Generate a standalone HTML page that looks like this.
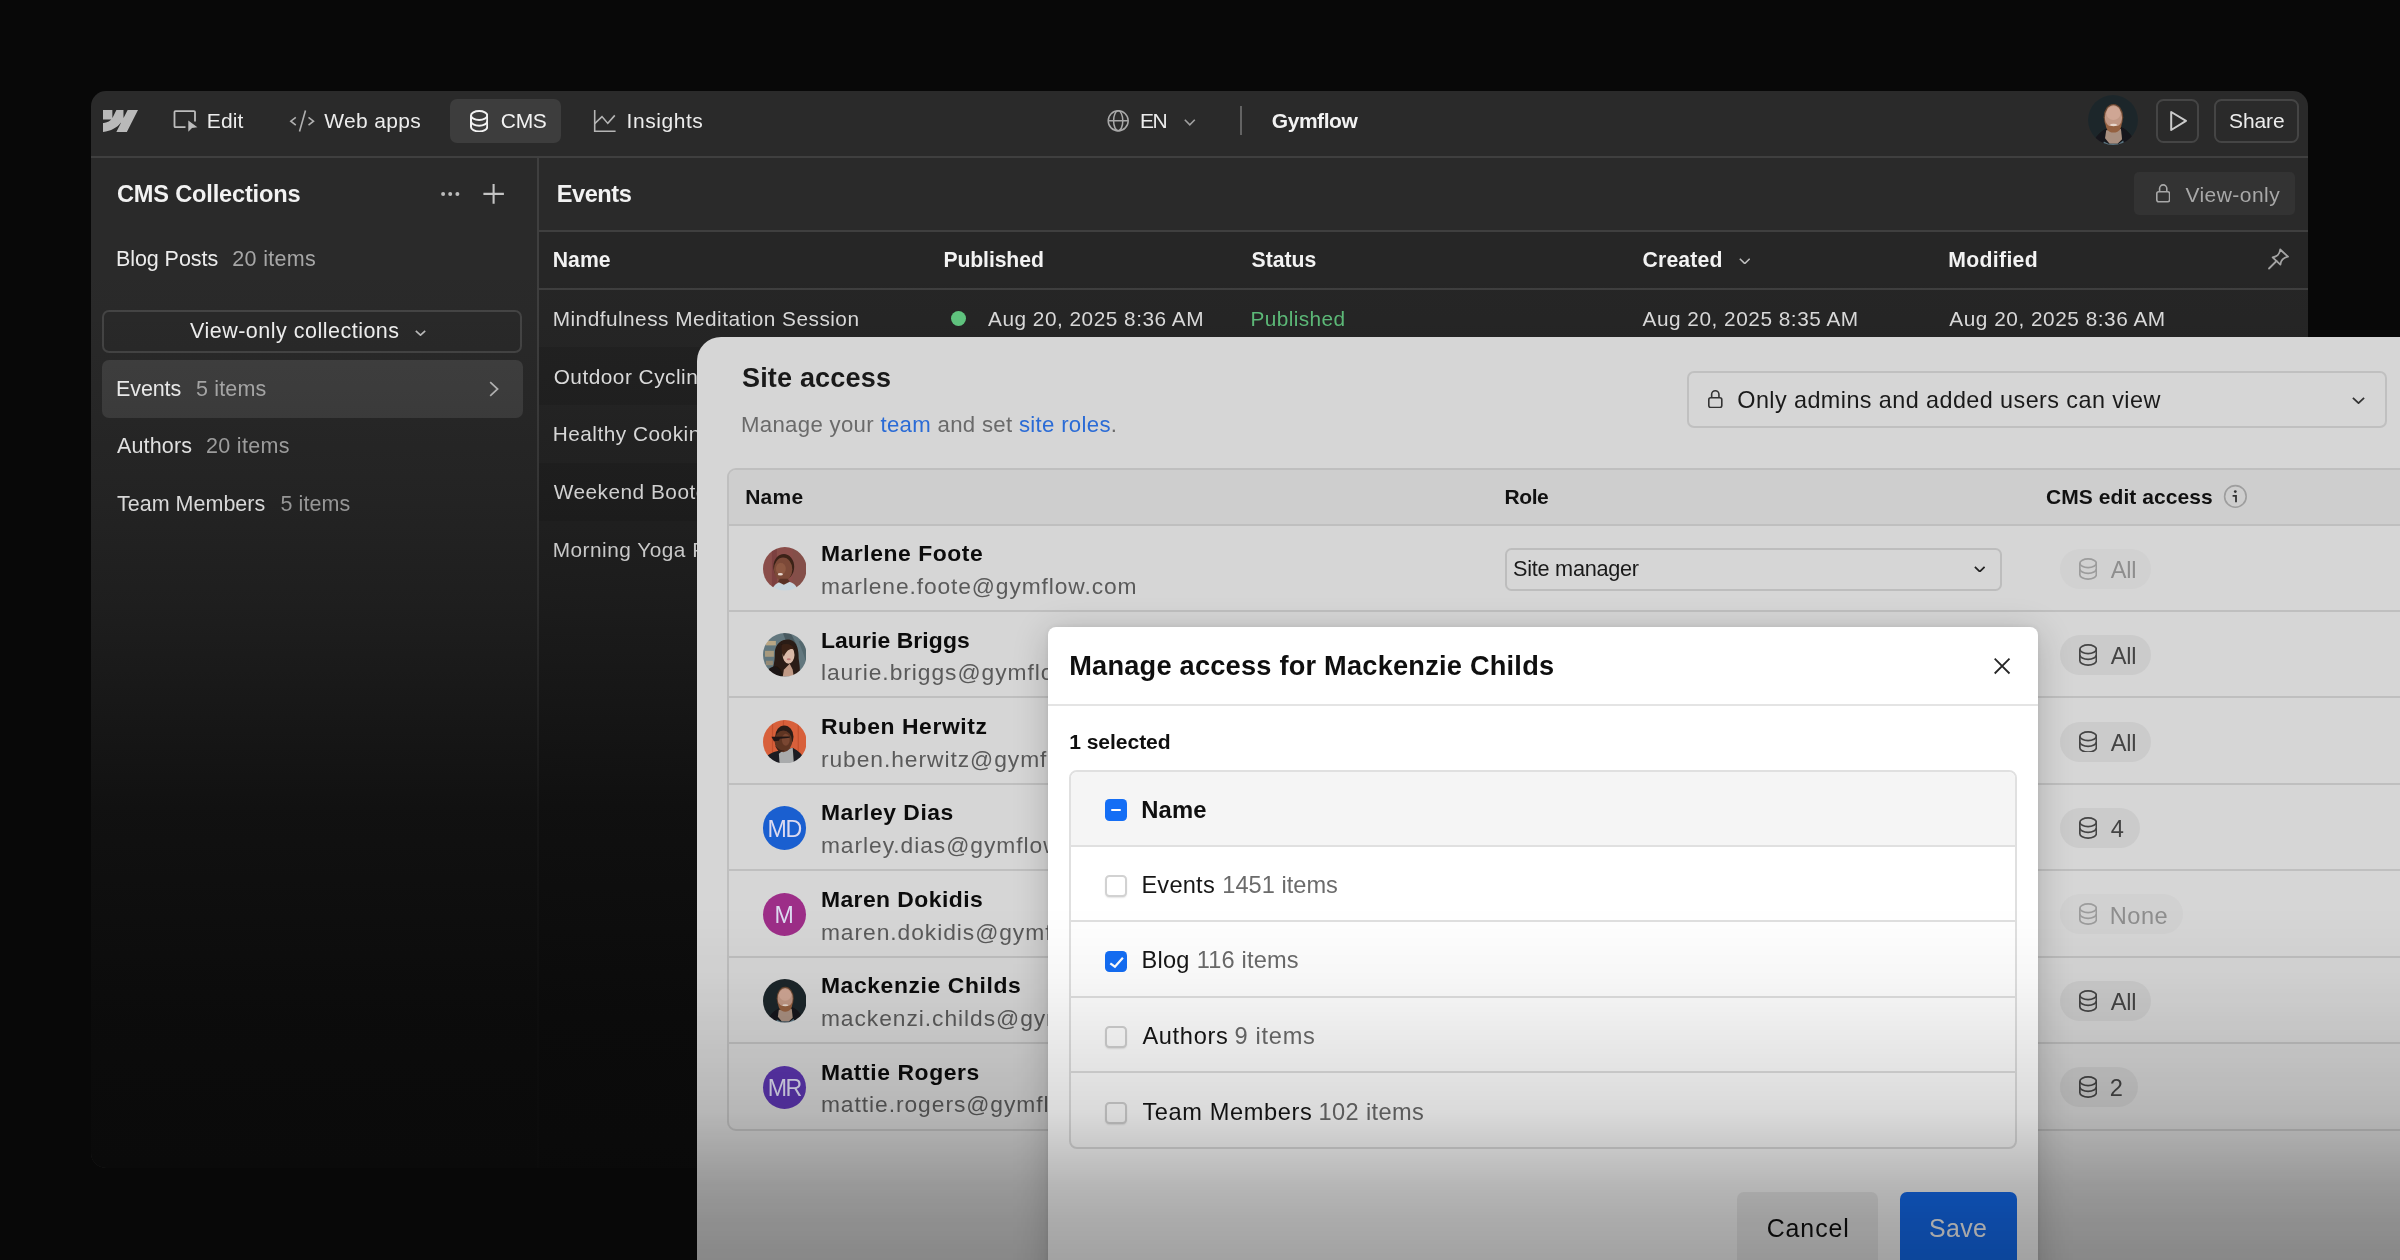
<!DOCTYPE html><html><head><meta charset="utf-8"><title>Site access</title><style>
html,body{margin:0;padding:0}
body{width:2400px;height:1260px;background:#080808;overflow:hidden;position:relative;font-family:'Liberation Sans',sans-serif}
.t{position:absolute;white-space:nowrap;line-height:30px;height:30px;font-kerning:normal}
.layer{position:absolute;left:0;top:0;width:2400px;height:1260px;overflow:hidden;will-change:transform}
.b{position:absolute;box-sizing:border-box}
</style></head><body><div class="layer"><div class="b" style="left:91px;top:91px;width:2217px;height:1077px;border-radius:15px;background:#2a2a2a;overflow:hidden">
<div style="position:absolute;left:-91px;top:-91px;width:2400px;height:1260px">
<div class="b" style="left:539px;top:232px;width:1770px;height:940px;background:#262626"></div>
<div class="b" style="left:539px;top:346.6px;width:1770px;height:58.39999999999998px;background:#222222"></div>
<div class="b" style="left:539px;top:463px;width:1770px;height:58px;background:#222222"></div>
<div class="b" style="left:91px;top:156px;width:2217px;height:2px;background:#3f3f3f"></div>
<div class="b" style="left:537px;top:157px;width:2px;height:1011px;background:#3f3f3f"></div>
<div class="b" style="left:539px;top:230px;width:1770px;height:2px;background:#3f3f3f"></div>
<div class="b" style="left:539px;top:287.7px;width:1770px;height:2px;background:#3f3f3f"></div>
<div class="b" style="left:450.3px;top:99.2px;width:110.8px;height:43.4px;border-radius:7px;background:#3d3d3d"></div>
<div class="b" style="left:1240.2px;top:106.3px;width:2px;height:28.7px;background:#636363"></div>
<div class="b" style="left:2156px;top:99px;width:43px;height:43.5px;border-radius:7.5px;border:2px solid #454545"></div>
<div class="b" style="left:2213.7px;top:99px;width:85.5px;height:43.5px;border-radius:7.5px;border:2px solid #454545"></div>
<div class="b" style="left:2133.8px;top:172.2px;width:161.5px;height:43.2px;border-radius:5px;background:#333"></div>
<div class="b" style="left:102px;top:309.8px;width:420px;height:42.8px;border-radius:7px;border:2px solid #464646"></div>
<div class="b" style="left:102px;top:360.2px;width:420.5px;height:57.8px;border-radius:7px;background:#414141"></div>
<div class="b" style="left:950.9px;top:310.8px;width:15px;height:15px;border-radius:50%;background:#62c982"></div>
<svg style="position:absolute;left:2087.5px;top:95.3px" width="50" height="50" viewBox="0 0 44 44" ><defs><clipPath id="av0"><circle cx="22" cy="22" r="22"/></clipPath><filter id="av0f" x="-10%" y="-10%" width="120%" height="120%"><feGaussianBlur stdDeviation="0.6"/></filter></defs><g clip-path="url(#av0)"><g filter="url(#av0f)"><rect x="-4" y="-4" width="52" height="52" fill="#1f282b"/><path d="M4 44C6 36 12 31 17 29L29 28C36 31 40 37 42 44Z" fill="#17181b"/><path d="M16 31L29 30L30 39L26 43L19 43L15 38Z" fill="#a98f80"/><path d="M14 41L18 43L27 43L31 40L32 44L13 44Z" fill="#5a7482"/><ellipse cx="22.4" cy="19.5" rx="8.6" ry="11.6" fill="#6a4630"/><ellipse cx="22.4" cy="20" rx="7.6" ry="11" fill="#c09784"/><ellipse cx="22.4" cy="16" rx="6.2" ry="6" fill="#cfa694"/><path d="M15.5 23C17 27 19 28 22.5 27C26 28 28 27 29.5 23C30 30 27 33 22.5 33C18 33 15 30 15.5 23Z" fill="#94603f"/><ellipse cx="22.5" cy="26.4" rx="3" ry="1" fill="#e6d6cc"/></g></g></svg>
<svg style="position:absolute;left:103px;top:110px" width="35" height="22" viewBox="0 0 1080 674" ><path fill="#b9b9b9" d="M1080 0L735.386 673.684H411.695L555.916 394.481H549.445C430.464 548.934 252.942 650.61 0 673.684V398.344C0 398.344 161.813 388.787 256.938 288.776H0V0.00531H288.771V237.515L295.252 237.489L413.254 0.00531H631.644V236.009L638.126 235.999L760.555 0H1080Z"/></svg><svg style="position:absolute;left:170px;top:106px" width="32" height="30" viewBox="0 0 32 30" ><path d="M15.5 21.2H5.5A1 1 0 0 1 4.5 20.2V6.1A1 1 0 0 1 5.5 5.1H24A1 1 0 0 1 25 6.1V15.5" fill="none" stroke="#bdbdbd" stroke-width="1.8"/><path d="M18.3 14.5L27.4 21.3L22 22L18.3 25.7Z" fill="#bdbdbd"/></svg><svg style="position:absolute;left:288px;top:108px" width="30" height="26" viewBox="0 0 30 26" ><g fill="none" stroke="#b0b0b0" stroke-width="1.6"><path d="M7.8 9.3L2.8 13.2L7.8 17.1"/><path d="M17.5 2.5L11.5 23.5"/><path d="M20.5 9.3L25.5 13.2L20.5 17.1"/></g></svg><svg style="position:absolute;left:469.95px;top:109.8px" width="18.25" height="22.4" viewBox="0 0 18.25 22.4" ><g fill="none" stroke="#f2f2f2" stroke-width="2.0"><ellipse cx="9.125" cy="5.4799999999999995" rx="8.125" ry="4.4799999999999995"/><path d="M1.0 5.4799999999999995V16.919999999999998A8.125 4.4799999999999995 0 0 0 17.25 16.919999999999998V5.4799999999999995"/><path d="M1.0 11.2A8.125 4.4799999999999995 0 0 0 17.25 11.2"/></g></svg><svg style="position:absolute;left:590px;top:108px" width="28" height="26" viewBox="0 0 28 26" ><g fill="none" stroke="#b5b5b5" stroke-width="1.6"><path d="M4.7 2V23.2H25.6"/><path d="M4.7 15.6L12 8.6L17.8 15.4L24.8 7.4"/></g></svg><svg style="position:absolute;left:1106px;top:109px" width="24" height="24" viewBox="0 0 24 24" ><g fill="none" stroke="#a8a8a8" stroke-width="1.5"><circle cx="12.2" cy="11.8" r="10"/><ellipse cx="12.2" cy="11.8" rx="4.6" ry="10"/><path d="M2.2 11.8H22.2"/></g></svg><svg style="position:absolute;left:1184px;top:119px" width="11.6" height="6.6" viewBox="0 0 11.6 6.6" ><path d="M0.8 0.8L5.8 5.8L10.799999999999999 0.8" fill="none" stroke="#a0a0a0" stroke-width="1.6"/></svg><svg style="position:absolute;left:2166px;top:109px" width="24" height="24" viewBox="0 0 24 24" ><path d="M5.2 3L20 11.8L5.2 21Z" fill="none" stroke="#cacaca" stroke-width="2" stroke-linejoin="round"/></svg><svg style="position:absolute;left:440px;top:190px" width="22" height="8" viewBox="0 0 22 8" ><g fill="#bcbcbc"><circle cx="3.1" cy="3.9" r="2"/><circle cx="10.2" cy="3.9" r="2"/><circle cx="17.4" cy="3.9" r="2"/></g></svg><svg style="position:absolute;left:483px;top:184px" width="22" height="21" viewBox="0 0 22 21" ><path d="M10.6 0V19.8M0.4 9.9H20.9" fill="none" stroke="#c4c4c4" stroke-width="2.1"/></svg><svg style="position:absolute;left:2156px;top:183.2px" width="14.4" height="19.6" viewBox="0 0 14.4 19.6" ><g fill="none" stroke="#a8a8a8" stroke-width="1.6"><rect x="0.8" y="8.82" width="12.8" height="9.98" rx="2"/><path d="M3.6 8.82V5.488000000000001A3.6 3.6 0 0 1 10.8 5.488000000000001V8.82"/></g></svg><svg style="position:absolute;left:415px;top:329.5px" width="11" height="6" viewBox="0 0 11 6" ><path d="M0.8 0.8L5.5 5.2L10.2 0.8" fill="none" stroke="#c0c0c0" stroke-width="1.6"/></svg><svg style="position:absolute;left:488px;top:381px" width="12" height="16" viewBox="0 0 12 16" ><path d="M2.2 1.2L9.6 8L2.2 14.8" fill="none" stroke="#c0c0c0" stroke-width="1.7"/></svg><svg style="position:absolute;left:1738.5px;top:257.6px" width="11.5" height="6.4" viewBox="0 0 11.5 6.4" ><path d="M0.8 0.8L5.75 5.6000000000000005L10.7 0.8" fill="none" stroke="#c0c0c0" stroke-width="1.6"/></svg><svg style="position:absolute;left:2266px;top:247px" width="24" height="24" viewBox="0 0 24 24" ><g fill="none" stroke="#a4a4a4" stroke-width="1.8" stroke-linejoin="round" stroke-linecap="round"><path d="M14.2 2.5L22 9.7Q15 11.15 14.4 17.6L6.6 10.3Q13.4 9.4 14.2 2.5Z"/><path d="M10.5 14L3 21.5"/></g></svg>
<div class="b" style="left:91px;top:91px;width:2217px;height:1077px;background:linear-gradient(to bottom, rgba(8,8,8,0) 0px, rgba(8,8,8,0) 159px, rgba(8,8,8,0.02) 209px, rgba(8,8,8,0.09) 299px, rgba(8,8,8,0.20) 409px, rgba(8,8,8,0.34) 509px, rgba(8,8,8,0.55) 620px, rgba(8,8,8,0.74) 719px, rgba(8,8,8,0.90) 928px, rgba(8,8,8,0.94) 1077px)"></div>
<span class="t" id="t0" style="left:206.80px;top:106.00px;font-size:21.0px;color:#ececec;font-weight:400;letter-spacing:0.149px">Edit</span>
<span class="t" id="t1" style="left:324.30px;top:106.00px;font-size:21.0px;color:#ececec;font-weight:400;letter-spacing:0.318px">Web apps</span>
<span class="t" id="t2" style="left:500.80px;top:106.00px;font-size:21.0px;color:#f2f2f2;font-weight:400;letter-spacing:-0.329px">CMS</span>
<span class="t" id="t3" style="left:626.60px;top:106.00px;font-size:21.0px;color:#ececec;font-weight:400;letter-spacing:0.547px">Insights</span>
<span class="t" id="t4" style="left:1140.00px;top:106.00px;font-size:21.0px;color:#ececec;font-weight:400;letter-spacing:-1.607px">EN</span>
<span class="t" id="t5" style="left:1271.80px;top:106.00px;font-size:21.0px;color:#f2f2f2;font-weight:700;letter-spacing:-0.457px">Gymflow</span>
<span class="t" id="t6" style="left:2229.00px;top:106.00px;font-size:21.0px;color:#ececec;font-weight:400;letter-spacing:-0.090px">Share</span>
<span class="t" id="t7" style="left:117.00px;top:179.00px;font-size:23.6px;color:#f2f2f2;font-weight:700;letter-spacing:-0.187px">CMS Collections</span>
<span class="t" id="t8" style="left:556.70px;top:179.00px;font-size:23.6px;color:#f2f2f2;font-weight:700;letter-spacing:-0.450px">Events</span>
<span class="t" id="t9" style="left:2185.40px;top:180.00px;font-size:21.0px;color:#a8a8a8;font-weight:400;letter-spacing:0.456px">View-only</span>
<span class="t" id="t10" style="left:115.90px;top:244.00px;font-size:21.5px;color:#ececec;font-weight:400;letter-spacing:-0.058px">Blog Posts</span>
<span class="t" id="t11" style="left:232.30px;top:244.00px;font-size:21.5px;color:#a6a6a6;font-weight:400;letter-spacing:0.314px">20 items</span>
<span class="t" id="t12" style="left:190.00px;top:316.00px;font-size:21.5px;color:#ececec;font-weight:400;letter-spacing:0.494px">View-only collections</span>
<span class="t" id="t13" style="left:116.00px;top:374.00px;font-size:21.5px;color:#e8e8e8;font-weight:400;letter-spacing:-0.096px">Events</span>
<span class="t" id="t14" style="left:196.00px;top:374.00px;font-size:21.5px;color:#a4a4a4;font-weight:400;letter-spacing:0.159px">5 items</span>
<span class="t" id="t15" style="left:117.00px;top:431.00px;font-size:21.5px;color:#e0e0e0;font-weight:400;letter-spacing:0.142px">Authors</span>
<span class="t" id="t16" style="left:206.00px;top:431.00px;font-size:21.5px;color:#9c9c9c;font-weight:400;letter-spacing:0.328px">20 items</span>
<span class="t" id="t17" style="left:117.00px;top:489.00px;font-size:21.5px;color:#d8d8d8;font-weight:400;letter-spacing:0.009px">Team Members</span>
<span class="t" id="t18" style="left:280.50px;top:489.00px;font-size:21.5px;color:#969696;font-weight:400;letter-spacing:0.075px">5 items</span>
<span class="t" id="t19" style="left:552.70px;top:245.00px;font-size:21.2px;color:#f2f2f2;font-weight:700;letter-spacing:0.059px">Name</span>
<span class="t" id="t20" style="left:943.40px;top:245.00px;font-size:21.2px;color:#f2f2f2;font-weight:700;letter-spacing:-0.100px">Published</span>
<span class="t" id="t21" style="left:1251.50px;top:245.00px;font-size:21.2px;color:#f2f2f2;font-weight:700;letter-spacing:0.006px">Status</span>
<span class="t" id="t22" style="left:1642.50px;top:245.00px;font-size:21.2px;color:#f2f2f2;font-weight:700;letter-spacing:0.175px">Created</span>
<span class="t" id="t23" style="left:1948.30px;top:245.00px;font-size:21.2px;color:#f2f2f2;font-weight:700;letter-spacing:0.322px">Modified</span>
<span class="t" id="t24" style="left:552.70px;top:304.00px;font-size:20.8px;color:#d8d8d8;font-weight:400;letter-spacing:0.476px">Mindfulness Meditation Session</span>
<span class="t" id="t25" style="left:988.00px;top:304.00px;font-size:20.8px;color:#d8d8d8;font-weight:400;letter-spacing:0.508px">Aug 20, 2025 8:36 AM</span>
<span class="t" id="t26" style="left:1250.50px;top:304.00px;font-size:20.8px;color:#5cb877;font-weight:400;letter-spacing:0.403px">Published</span>
<span class="t" id="t27" style="left:1642.50px;top:304.00px;font-size:20.8px;color:#d8d8d8;font-weight:400;letter-spacing:0.519px">Aug 20, 2025 8:35 AM</span>
<span class="t" id="t28" style="left:1949.30px;top:304.00px;font-size:20.8px;color:#d8d8d8;font-weight:400;letter-spacing:0.529px">Aug 20, 2025 8:36 AM</span>
<span class="t" id="t29" style="left:553.70px;top:362.00px;font-size:20.8px;color:#dadada;font-weight:400;letter-spacing:0.500px">Outdoor Cycling Adventure</span>
<span class="t" id="t30" style="left:552.70px;top:419.00px;font-size:20.8px;color:#d6d6d6;font-weight:400;letter-spacing:0.500px">Healthy Cooking Workshop</span>
<span class="t" id="t31" style="left:553.70px;top:477.00px;font-size:20.8px;color:#d0d0d0;font-weight:400;letter-spacing:0.500px">Weekend Bootcamp</span>
<span class="t" id="t32" style="left:552.70px;top:535.00px;font-size:20.8px;color:#c8c8c8;font-weight:400;letter-spacing:0.500px">Morning Yoga Flow</span>
</div></div></div><div class="layer"><div class="b" style="left:697px;top:337px;width:1800px;height:1000px;border-radius:24px;background:#d6d6d6"></div>
<div class="b" style="left:1687px;top:371px;width:700px;height:57px;border-radius:7px;border:2px solid #c0c0c0"></div>
<svg style="position:absolute;left:1708.3px;top:389.2px" width="14.6" height="19.3" viewBox="0 0 14.6 19.3" ><g fill="none" stroke="#333" stroke-width="1.6"><rect x="0.8" y="8.685" width="13.0" height="9.815" rx="2"/><path d="M3.65 8.685V5.404000000000001A3.65 3.65 0 0 1 10.95 5.404000000000001V8.685"/></g></svg>
<svg style="position:absolute;left:2352px;top:396.5px" width="13" height="7" viewBox="0 0 13 7" ><path d="M0.9 0.9L6.5 6.1L12.1 0.9" fill="none" stroke="#333" stroke-width="1.8"/></svg>
<div class="b" style="left:727.3px;top:468.3px;width:1800px;height:662.7px;border-radius:9px;border:2px solid #bfbfbf;overflow:hidden">
<div class="b" style="left:0;top:0;width:1800px;height:54px;background:#cecece"></div>
<div class="b" style="left:0;top:53.4px;width:1800px;height:2px;background:#bfbfbf"></div>
<div class="b" style="left:0;top:139.8px;width:1800px;height:2px;background:#bfbfbf"></div>
<div class="b" style="left:0;top:226.2px;width:1800px;height:2px;background:#bfbfbf"></div>
<div class="b" style="left:0;top:312.6px;width:1800px;height:2px;background:#bfbfbf"></div>
<div class="b" style="left:0;top:399.0px;width:1800px;height:2px;background:#bfbfbf"></div>
<div class="b" style="left:0;top:485.4px;width:1800px;height:2px;background:#bfbfbf"></div>
<div class="b" style="left:0;top:571.8px;width:1800px;height:2px;background:#bfbfbf"></div>
</div>
<svg style="position:absolute;left:2223px;top:483.5px" width="25" height="25" viewBox="0 0 25 25" ><circle cx="12.4" cy="12.4" r="10.8" fill="none" stroke="#9e9e9e" stroke-width="1.6"/><circle cx="12.3" cy="7.6" r="1.4" fill="#333"/><path d="M9.6 11.9H13V18.3" fill="none" stroke="#333" stroke-width="1.8"/></svg>
<div class="b" style="left:1505px;top:547.5px;width:496.5px;height:43px;border-radius:6.5px;border:2px solid #bdbdbd"></div>
<svg style="position:absolute;left:1973.5px;top:565.5px" width="11.5" height="6.5" viewBox="0 0 11.5 6.5" ><path d="M0.9 0.9L5.75 5.6L10.6 0.9" fill="none" stroke="#222" stroke-width="1.8"/></svg>
<svg style="position:absolute;left:762.8000000000001px;top:547.0px" width="43.6" height="43.6" viewBox="0 0 44 44" ><defs><clipPath id="av1"><circle cx="22" cy="22" r="22"/></clipPath><filter id="av1f" x="-10%" y="-10%" width="120%" height="120%"><feGaussianBlur stdDeviation="0.7"/></filter></defs><g clip-path="url(#av1)"><g filter="url(#av1f)"><rect x="-4" y="-4" width="52" height="52" fill="#8a4e4a"/><rect x="9" y="-4" width="5" height="52" fill="#7c403f"/><rect x="30" y="-4" width="18" height="52" fill="#84504a"/><path d="M8 48C9 39 14 35.5 20 34.5L24 34.5C31 35.5 35 39 36 48Z" fill="#c9d6de"/><ellipse cx="21" cy="20" rx="10.5" ry="13" fill="#3a2119"/><ellipse cx="20.3" cy="22.5" rx="9.3" ry="12" fill="#7b4a37"/><ellipse cx="18" cy="22" rx="5" ry="6" fill="#8d5842"/><ellipse cx="17.5" cy="27.5" rx="2.6" ry="1.2" fill="#e8d8d0"/><path d="M15 35L21 38L27 35L25 32L17 32Z" fill="#5a3226"/></g></g></svg>
<svg style="position:absolute;left:762.8000000000001px;top:633.4px" width="43.6" height="43.6" viewBox="0 0 44 44" ><defs><clipPath id="av2"><circle cx="22" cy="22" r="22"/></clipPath><filter id="av2f" x="-10%" y="-10%" width="120%" height="120%"><feGaussianBlur stdDeviation="0.7"/></filter></defs><g clip-path="url(#av2)"><g filter="url(#av2f)"><rect x="-4" y="-4" width="52" height="52" fill="#62777e"/><rect x="3" y="8" width="10" height="4.5" fill="#b9a684"/><rect x="2" y="18" width="9" height="6" fill="#a89a7e"/><rect x="3" y="28" width="7" height="4.5" fill="#958a74"/><path d="M20 0L28 0L34 12L24 10Z" fill="#4a5a60"/><path d="M36 8L44 30L44 8Z" fill="#52686e"/><path d="M12 20C12 9 22 5 28 7C35 9 36 18 36 26C37 33 38 38 36 44L6 44C10 38 12 30 12 20Z" fill="#2a1a12"/><path d="M4 44L6 36C12 32 16 34 18 38L20 44Z" fill="#1c1412"/><ellipse cx="25.8" cy="22" rx="6" ry="9" fill="#d9b9a8"/><path d="M19 12C23 10 30 11 32 17C28 15 24 17 21 24C19 20 18 16 19 12Z" fill="#3a2416"/><path d="M21 37L27 31L30 37L31 44L20 44Z" fill="#c09a86"/><ellipse cx="26" cy="26.5" rx="2" ry="1" fill="#c07a78"/></g></g></svg>
<svg style="position:absolute;left:762.8000000000001px;top:719.8px" width="43.6" height="43.6" viewBox="0 0 44 44" ><defs><clipPath id="av3"><circle cx="22" cy="22" r="22"/></clipPath><filter id="av3f" x="-10%" y="-10%" width="120%" height="120%"><feGaussianBlur stdDeviation="0.7"/></filter></defs><g clip-path="url(#av3)"><g filter="url(#av3f)"><rect x="-4" y="-4" width="52" height="52" fill="#d8603a"/><rect x="9" y="-4" width="1.2" height="52" fill="#c4502e"/><rect x="20" y="-4" width="1.2" height="52" fill="#c4502e"/><rect x="35" y="-4" width="1.2" height="52" fill="#c4502e"/><path d="M4 36C8 33 14 31 18 31L30 28C36 31 40 35 42 40L42 48L4 48Z" fill="#1e1e20"/><path d="M16 34C19 31 24 30 30 28L31 42L30 48L17 48Z" fill="#a9abac"/><ellipse cx="21.5" cy="17" rx="9.3" ry="11.5" fill="#2c1d18"/><ellipse cx="20.5" cy="21.5" rx="8.8" ry="11" fill="#5f3524"/><ellipse cx="23" cy="20" rx="4" ry="6" fill="#7a4630"/><path d="M8.5 17L27 16.6L27 18L17 19L16 21L11 21.5Z" fill="#241816"/><path d="M12 26L17 30L22 31L16 32Z" fill="#3a2018"/></g></g></svg>
<div class="b" style="left:762.8px;top:806.3px;width:43.6px;height:43.6px;border-radius:50%;background:#1a5fd0"></div>
<div class="b" style="left:762.8px;top:892.7px;width:43.6px;height:43.6px;border-radius:50%;background:#9d2e88"></div>
<div class="b" style="left:762.8px;top:1065.5px;width:43.6px;height:43.6px;border-radius:50%;background:#5b35ad"></div>
<svg style="position:absolute;left:762.8000000000001px;top:979.0px" width="43.6" height="43.6" viewBox="0 0 44 44" ><defs><clipPath id="av5"><circle cx="22" cy="22" r="22"/></clipPath><filter id="av5f" x="-10%" y="-10%" width="120%" height="120%"><feGaussianBlur stdDeviation="0.7"/></filter></defs><g clip-path="url(#av5)"><g filter="url(#av5f)"><rect x="-4" y="-4" width="52" height="52" fill="#1f282b"/><path d="M4 44C6 36 12 31 17 29L29 28C36 31 40 37 42 44Z" fill="#17181b"/><path d="M16 31L29 30L30 39L26 43L19 43L15 38Z" fill="#a98f80"/><path d="M14 41L18 43L27 43L31 40L32 44L13 44Z" fill="#5a7482"/><ellipse cx="22.4" cy="19.5" rx="8.6" ry="11.6" fill="#6a4630"/><ellipse cx="22.4" cy="20" rx="7.6" ry="11" fill="#c09784"/><ellipse cx="22.4" cy="16" rx="6.2" ry="6" fill="#cfa694"/><path d="M15.5 23C17 27 19 28 22.5 27C26 28 28 27 29.5 23C30 30 27 33 22.5 33C18 33 15 30 15.5 23Z" fill="#94603f"/><ellipse cx="22.5" cy="26.4" rx="3" ry="1" fill="#e6d6cc"/></g></g></svg>
<div class="b" style="left:2060px;top:548.8px;width:91px;height:40px;border-radius:20px;background:#d1d1d1"></div>
<svg style="position:absolute;left:2079.3px;top:557.8px" width="18.2" height="21.9" viewBox="0 0 18.2 21.9" ><g fill="none" stroke="#9c9c9c" stroke-width="1.7"><ellipse cx="9.1" cy="5.2299999999999995" rx="8.25" ry="4.38"/><path d="M0.8499999999999996 5.2299999999999995V16.669999999999998A8.25 4.38 0 0 0 17.35 16.669999999999998V5.2299999999999995"/><path d="M0.8499999999999996 10.95A8.25 4.38 0 0 0 17.35 10.95"/></g></svg>
<div class="b" style="left:2060px;top:635.2px;width:91px;height:40px;border-radius:20px;background:#cbcbcb"></div>
<svg style="position:absolute;left:2079.3px;top:644.1999999999999px" width="18.2" height="21.9" viewBox="0 0 18.2 21.9" ><g fill="none" stroke="#444" stroke-width="1.7"><ellipse cx="9.1" cy="5.2299999999999995" rx="8.25" ry="4.38"/><path d="M0.8499999999999996 5.2299999999999995V16.669999999999998A8.25 4.38 0 0 0 17.35 16.669999999999998V5.2299999999999995"/><path d="M0.8499999999999996 10.95A8.25 4.38 0 0 0 17.35 10.95"/></g></svg>
<div class="b" style="left:2060px;top:721.6px;width:91px;height:40px;border-radius:20px;background:#cbcbcb"></div>
<svg style="position:absolute;left:2079.3px;top:730.5999999999999px" width="18.2" height="21.9" viewBox="0 0 18.2 21.9" ><g fill="none" stroke="#444" stroke-width="1.7"><ellipse cx="9.1" cy="5.2299999999999995" rx="8.25" ry="4.38"/><path d="M0.8499999999999996 5.2299999999999995V16.669999999999998A8.25 4.38 0 0 0 17.35 16.669999999999998V5.2299999999999995"/><path d="M0.8499999999999996 10.95A8.25 4.38 0 0 0 17.35 10.95"/></g></svg>
<div class="b" style="left:2060px;top:808.0px;width:80px;height:40px;border-radius:20px;background:#cbcbcb"></div>
<svg style="position:absolute;left:2079.3px;top:817.0px" width="18.2" height="21.9" viewBox="0 0 18.2 21.9" ><g fill="none" stroke="#444" stroke-width="1.7"><ellipse cx="9.1" cy="5.2299999999999995" rx="8.25" ry="4.38"/><path d="M0.8499999999999996 5.2299999999999995V16.669999999999998A8.25 4.38 0 0 0 17.35 16.669999999999998V5.2299999999999995"/><path d="M0.8499999999999996 10.95A8.25 4.38 0 0 0 17.35 10.95"/></g></svg>
<div class="b" style="left:2060px;top:894.4px;width:123px;height:40px;border-radius:20px;background:#d1d1d1"></div>
<svg style="position:absolute;left:2079.3px;top:903.4px" width="18.2" height="21.9" viewBox="0 0 18.2 21.9" ><g fill="none" stroke="#9c9c9c" stroke-width="1.7"><ellipse cx="9.1" cy="5.2299999999999995" rx="8.25" ry="4.38"/><path d="M0.8499999999999996 5.2299999999999995V16.669999999999998A8.25 4.38 0 0 0 17.35 16.669999999999998V5.2299999999999995"/><path d="M0.8499999999999996 10.95A8.25 4.38 0 0 0 17.35 10.95"/></g></svg>
<div class="b" style="left:2060px;top:980.8px;width:91px;height:40px;border-radius:20px;background:#cbcbcb"></div>
<svg style="position:absolute;left:2079.3px;top:989.8px" width="18.2" height="21.9" viewBox="0 0 18.2 21.9" ><g fill="none" stroke="#444" stroke-width="1.7"><ellipse cx="9.1" cy="5.2299999999999995" rx="8.25" ry="4.38"/><path d="M0.8499999999999996 5.2299999999999995V16.669999999999998A8.25 4.38 0 0 0 17.35 16.669999999999998V5.2299999999999995"/><path d="M0.8499999999999996 10.95A8.25 4.38 0 0 0 17.35 10.95"/></g></svg>
<div class="b" style="left:2060px;top:1067.2px;width:78px;height:40px;border-radius:20px;background:#cbcbcb"></div>
<svg style="position:absolute;left:2079.3px;top:1076.2px" width="18.2" height="21.9" viewBox="0 0 18.2 21.9" ><g fill="none" stroke="#444" stroke-width="1.7"><ellipse cx="9.1" cy="5.2299999999999995" rx="8.25" ry="4.38"/><path d="M0.8499999999999996 5.2299999999999995V16.669999999999998A8.25 4.38 0 0 0 17.35 16.669999999999998V5.2299999999999995"/><path d="M0.8499999999999996 10.95A8.25 4.38 0 0 0 17.35 10.95"/></g></svg>
<span class="t" id="t33" style="left:742.00px;top:363.00px;font-size:27.0px;color:#1a1a1a;font-weight:700;letter-spacing:0.180px">Site access</span>
<span class="t" id="t34" style="left:741.00px;top:410.00px;font-size:22.2px;color:#6a6a6a;font-weight:400;letter-spacing:0.312px">Manage your <span style="color:#2a6bd6">team</span> and set <span style="color:#2a6bd6">site roles</span>.</span>
<span class="t" id="t35" style="left:1737.30px;top:385.00px;font-size:23.4px;color:#1a1a1a;font-weight:400;letter-spacing:0.421px">Only admins and added users can view</span>
<span class="t" id="t36" style="left:745.20px;top:482.00px;font-size:21.0px;color:#111;font-weight:700;letter-spacing:0.261px">Name</span>
<span class="t" id="t37" style="left:1504.60px;top:482.00px;font-size:21.0px;color:#111;font-weight:700;letter-spacing:-0.443px">Role</span>
<span class="t" id="t38" style="left:2046.00px;top:482.00px;font-size:21.0px;color:#111;font-weight:700;letter-spacing:0.067px">CMS edit access</span>
<span class="t" id="t39" style="left:820.90px;top:538.00px;font-size:22.9px;color:#0c0c0c;font-weight:700;letter-spacing:0.547px">Marlene Foote</span>
<span class="t" id="t40" style="left:820.90px;top:571.00px;font-size:22.8px;color:#5a5a5a;font-weight:400;letter-spacing:0.888px">marlene.foote@gymflow.com</span>
<span class="t" id="t41" style="left:820.90px;top:625.00px;font-size:22.9px;color:#0c0c0c;font-weight:700;letter-spacing:0.107px">Laurie Briggs</span>
<span class="t" id="t42" style="left:820.90px;top:657.00px;font-size:22.8px;color:#5a5a5a;font-weight:400;letter-spacing:0.950px">laurie.briggs@gymflow.com</span>
<span class="t" id="t43" style="left:820.90px;top:711.00px;font-size:22.9px;color:#0c0c0c;font-weight:700;letter-spacing:0.589px">Ruben Herwitz</span>
<span class="t" id="t44" style="left:820.90px;top:744.00px;font-size:22.8px;color:#5a5a5a;font-weight:400;letter-spacing:0.950px">ruben.herwitz@gymflow.com</span>
<span class="t" id="t45" style="left:820.90px;top:797.00px;font-size:22.9px;color:#0c0c0c;font-weight:700;letter-spacing:0.509px">Marley Dias</span>
<span class="t" id="t46" style="left:820.90px;top:830.00px;font-size:22.8px;color:#5a5a5a;font-weight:400;letter-spacing:0.950px">marley.dias@gymflow.com</span>
<span class="t" id="t47" style="left:820.90px;top:884.00px;font-size:22.9px;color:#0c0c0c;font-weight:700;letter-spacing:0.448px">Maren Dokidis</span>
<span class="t" id="t48" style="left:820.90px;top:917.00px;font-size:22.8px;color:#5a5a5a;font-weight:400;letter-spacing:0.950px">maren.dokidis@gymflow.com</span>
<span class="t" id="t49" style="left:820.90px;top:970.00px;font-size:22.9px;color:#0c0c0c;font-weight:700;letter-spacing:0.601px">Mackenzie Childs</span>
<span class="t" id="t50" style="left:820.90px;top:1003.00px;font-size:22.8px;color:#5a5a5a;font-weight:400;letter-spacing:0.950px">mackenzi.childs@gymflow.com</span>
<span class="t" id="t51" style="left:820.90px;top:1057.00px;font-size:22.9px;color:#0c0c0c;font-weight:700;letter-spacing:0.581px">Mattie Rogers</span>
<span class="t" id="t52" style="left:820.90px;top:1089.00px;font-size:22.8px;color:#5a5a5a;font-weight:400;letter-spacing:0.950px">mattie.rogers@gymflow.com</span>
<span class="t" id="t53" style="left:1513.10px;top:554.00px;font-size:21.7px;color:#1a1a1a;font-weight:400;letter-spacing:-0.279px">Site manager</span>
<span class="t" id="t54" style="left:2110.80px;top:555.00px;font-size:23.6px;color:#8e8e8e;font-weight:400;letter-spacing:-0.289px">All</span>
<span class="t" id="t55" style="left:2110.80px;top:641.00px;font-size:23.6px;color:#444;font-weight:400;letter-spacing:-0.289px">All</span>
<span class="t" id="t56" style="left:2110.80px;top:728.00px;font-size:23.6px;color:#444;font-weight:400;letter-spacing:-0.289px">All</span>
<span class="t" id="t57" style="left:2110.80px;top:814.00px;font-size:23.6px;color:#444;font-weight:400;letter-spacing:-0.800px">4</span>
<span class="t" id="t58" style="left:2109.80px;top:901.00px;font-size:23.6px;color:#8e8e8e;font-weight:400;letter-spacing:0.473px">None</span>
<span class="t" id="t59" style="left:2110.80px;top:987.00px;font-size:23.6px;color:#444;font-weight:400;letter-spacing:-0.289px">All</span>
<span class="t" id="t60" style="left:2109.80px;top:1073.00px;font-size:23.6px;color:#444;font-weight:400;letter-spacing:1.200px">2</span>
<span class="t" id="t61" style="left:767.50px;top:814.00px;font-size:23.2px;color:#dcdaf0;font-weight:400;letter-spacing:-1.315px">MD</span>
<span class="t" id="t62" style="left:774.50px;top:900.00px;font-size:23.2px;color:#dcdaf0;font-weight:400;letter-spacing:1.500px">M</span>
<span class="t" id="t63" style="left:767.70px;top:1073.00px;font-size:23.2px;color:#dcdaf0;font-weight:400;letter-spacing:-1.415px">MR</span></div><div class="layer"><div class="b" style="left:1048px;top:627px;width:990px;height:700px;border-radius:8px;background:#fff;box-shadow:0 6px 36px rgba(0,0,0,0.20),0 0 6px rgba(0,0,0,0.08)"></div>
<div class="b" style="left:1048px;top:704px;width:990px;height:2px;background:#e4e4e4"></div>
<svg style="position:absolute;left:1991px;top:655px" width="22" height="22" viewBox="0 0 22 22" ><path d="M3.7 3.7L18.5 18.5M18.5 3.7L3.7 18.5" fill="none" stroke="#262626" stroke-width="1.8"/></svg>
<div class="b" style="left:1069.4px;top:770.4px;width:947.6px;height:378.4px;border-radius:8px;border:2px solid #e0e0e0;overflow:hidden">
<div class="b" style="left:0;top:0;width:947px;height:73px;background:#f5f5f5"></div>
<div class="b" style="left:0;top:72.4px;width:947px;height:2px;background:#e0e0e0"></div>
<div class="b" style="left:0;top:147.9px;width:947px;height:2px;background:#e0e0e0"></div>
<div class="b" style="left:0;top:223.4px;width:947px;height:2px;background:#e0e0e0"></div>
<div class="b" style="left:0;top:298.9px;width:947px;height:2px;background:#e0e0e0"></div>
</div>
<div class="b" style="left:1105.1px;top:799.2px;width:21.8px;height:21.8px;border-radius:4.5px;background:#146ef5"></div>
<div class="b" style="left:1110.8px;top:808.7px;width:10.5px;height:2.4px;background:#fff;border-radius:1px"></div>
<div class="b" style="left:1105.1px;top:875.0px;width:21.8px;height:21.8px;border-radius:4.5px;background:#fff;border:2px solid #d2d2d2;box-shadow:0 1px 1.5px rgba(0,0,0,0.10)"></div>
<div class="b" style="left:1105.1px;top:950.7px;width:21.8px;height:21.8px;border-radius:4.5px;background:#146ef5"></div>
<svg style="position:absolute;left:1105.1px;top:950.7px" width="22" height="22" viewBox="0 0 22 22" ><path d="M5.3 12.4L9.9 15.7L17.9 6.7" fill="none" stroke="#fff" stroke-width="2.2"/></svg>
<div class="b" style="left:1105.1px;top:1026.4px;width:21.8px;height:21.8px;border-radius:4.5px;background:#fff;border:2px solid #d2d2d2;box-shadow:0 1px 1.5px rgba(0,0,0,0.10)"></div>
<div class="b" style="left:1105.1px;top:1102.1px;width:21.8px;height:21.8px;border-radius:4.5px;background:#fff;border:2px solid #d2d2d2;box-shadow:0 1px 1.5px rgba(0,0,0,0.10)"></div>
<div class="b" style="left:1737px;top:1192px;width:141px;height:90px;border-radius:7px;background:#eeeeee"></div>
<div class="b" style="left:1900px;top:1192px;width:116.5px;height:90px;border-radius:7px;background:#146ef5"></div>
<span class="t" id="t64" style="left:1069.20px;top:651.00px;font-size:27.2px;color:#0f0f0f;font-weight:700;letter-spacing:0.225px">Manage access for Mackenzie Childs</span>
<span class="t" id="t65" style="left:1069.20px;top:727.00px;font-size:21.1px;color:#0f0f0f;font-weight:700;letter-spacing:-0.059px">1 selected</span>
<span class="t" id="t66" style="left:1141.20px;top:795.00px;font-size:23.8px;color:#0f0f0f;font-weight:700;letter-spacing:0.174px">Name</span>
<span class="t" id="t67" style="left:1141.40px;top:870.00px;font-size:23.6px;color:#161616;font-weight:400;letter-spacing:0.234px">Events</span>
<span class="t" id="t68" style="left:1222.30px;top:870.00px;font-size:23.6px;color:#6b6b6b;font-weight:400;letter-spacing:0.021px">1451 items</span>
<span class="t" id="t69" style="left:1141.40px;top:945.00px;font-size:23.6px;color:#161616;font-weight:400;letter-spacing:0.267px">Blog</span>
<span class="t" id="t70" style="left:1196.80px;top:945.00px;font-size:23.6px;color:#6b6b6b;font-weight:400;letter-spacing:0.145px">116 items</span>
<span class="t" id="t71" style="left:1142.40px;top:1021.00px;font-size:23.6px;color:#161616;font-weight:400;letter-spacing:0.681px">Authors</span>
<span class="t" id="t72" style="left:1234.50px;top:1021.00px;font-size:23.6px;color:#6b6b6b;font-weight:400;letter-spacing:0.708px">9 items</span>
<span class="t" id="t73" style="left:1142.40px;top:1097.00px;font-size:23.6px;color:#161616;font-weight:400;letter-spacing:0.620px">Team Members</span>
<span class="t" id="t74" style="left:1318.50px;top:1097.00px;font-size:23.6px;color:#6b6b6b;font-weight:400;letter-spacing:0.376px">102 items</span>
<span class="t" id="t75" style="left:1766.70px;top:1213.00px;font-size:24.9px;color:#111;font-weight:400;letter-spacing:0.930px">Cancel</span>
<span class="t" id="t76" style="left:1929.00px;top:1213.00px;font-size:24.9px;color:#fff;font-weight:400;letter-spacing:0.370px">Save</span></div><div class="b" style="left:697px;top:337px;width:1703px;height:923px;border-top-left-radius:24px;background:linear-gradient(to bottom, rgba(0,0,0,0) 570px, rgba(0,0,0,0.032) 640px, rgba(0,0,0,0.085) 705px, rgba(0,0,0,0.145) 775px, rgba(0,0,0,0.215) 811px, rgba(0,0,0,0.285) 848px, rgba(0,0,0,0.33) 883px, rgba(0,0,0,0.365) 923px)"></div></body></html>
